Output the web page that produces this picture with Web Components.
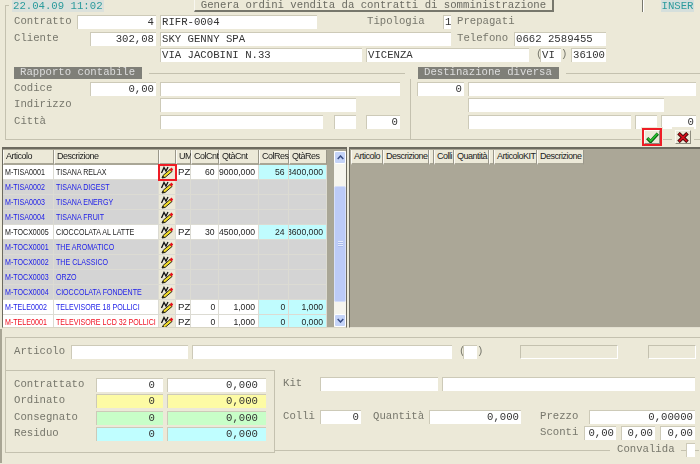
<!DOCTYPE html>
<html lang="it">
<head>
<meta charset="utf-8">
<title>Contratti</title>
<style>
  html, body { margin: 0; height: 100%; overflow: hidden; background: #ece9d8; }
  body { font: 10.67px "Liberation Mono", monospace; color: #333; }
</style>
</head>
<body>
<order-form></order-form>

<script>
/**
 * Makes a small helper that defines a custom element from a template string.
 *
 * @param {string} name - The element name.
 * @param {string} html - The shadow root markup.
 * @param {Function} [setup] - Called with the element when it is connected.
 */
function define (name, html, setup) {
  const template = document.createElement('template')
  template.innerHTML = html
  customElements.define(name, class extends HTMLElement {
    constructor () {
      super()
      this.attachShadow({ mode: 'open' }).appendChild(template.content.cloneNode(true))
    }

    connectedCallback () {
      const w = this.getAttribute('w')
      const ml = this.getAttribute('ml')
      const mt = this.getAttribute('mt')
      if (w) this.style.width = w + 'px'
      if (ml) this.style.marginLeft = ml + 'px'
      if (mt) this.style.marginTop = mt + 'px'
      if (setup) setup(this)
    }
  })
}

// Form pieces
define('form-row', `
<style>
  :host { display: flex; align-items: flex-start; height: 14px; }
</style>
<slot></slot>`)

define('form-label', `
<style>
  :host { display: block; flex: none; height: 14px; line-height: 13px; color: #77776c; white-space: nowrap; }
</style>
<slot></slot>`)

define('form-field', `
<style>
  :host {
    display: block; flex: none; box-sizing: border-box; height: 14px; line-height: 13px;
    padding: 0 2px 0 1px; background: var(--bg, #fff); color: #333; white-space: nowrap; overflow: hidden;
    border-top: 1px solid #cdcab8; border-left: 1px solid #cdcab8;
  }
  :host([r]) { text-align: right; }
  :host([p]) { padding-right: 8px; }
  :host([off]) { background: none; border: 1px solid #c4c1af; border-right-color: #fff; border-bottom-color: #fff; }
  :host([tone=y]) { --bg: #fdfba4; }
  :host([tone=g]) { --bg: #c8fec8; }
  :host([tone=c]) { --bg: #c0feff; }
</style>
<slot></slot>`)

define('section-head', `
<style>
  :host { display: flex; align-items: center; height: 12px; }
  b { flex: none; box-sizing: border-box; height: 12px; line-height: 11px; padding-left: 6px; font-weight: normal; background: #7f7f78; color: #ddd; white-space: nowrap; }
  i { flex: 1; height: 1px; background: #c4c1af; margin-left: 7px; }
</style>
<b part="title" id="t"><slot></slot></b><i></i>`, el => {
  el.shadowRoot.getElementById('t').style.width = el.getAttribute('tw') + 'px'
})

define('tool-button', `
<style>
  :host {
    position: absolute; top: 130px; width: 16px; height: 14px; box-sizing: border-box; display: flex;
    align-items: center; justify-content: center; background: #ece9d8;
    border: 1px solid; border-color: #fbfaf4 #8f8d80 #8f8d80 #fbfaf4; box-shadow: 0 0 0 3px #ece9d8;
  }
  :host([hot]) { outline: 2px solid #ee1c25; outline-offset: 0; }
</style>
<slot></slot>`, el => {
  el.style.left = el.getAttribute('x') + 'px'
})

define('top-bar', `
<style>
  :host { display: flex; height: 13px; align-items: flex-start; }
  .tick { margin: 5px 0 0 5px; width: 3px; height: 8px; border: 1px solid #c4c1af; border-width: 1px 0 0 1px; }
  .date { margin-left: 3px; width: 92px; height: 12px; line-height: 12px; padding-left: 1px; box-sizing: border-box; background: #dbe1dc; color: #2b9a9c; }
  .cmd {
    margin-left: 90px; width: 360px; height: 12px; line-height: 10px; box-sizing: border-box; text-align: center;
    color: #6b6b62; border-right: 2px solid #77776c; border-bottom: 2px solid #77776c; border-left: 1px solid #f8f7f0;
  }
  .sep { margin-left: 88px; width: 1px; height: 12px; background: #77776c; border-right: 1px solid #fff; }
  .mode { margin-left: 17px; width: 33px; height: 12px; line-height: 12px; text-align: center; background: #d5dfdc; color: #2b9a9c; }
</style>
<div class="tick"></div>
<div class="date">22.04.09 11:02</div>
<div class="cmd">Genera ordini vendita da contratti di somministrazione</div>
<div class="sep"></div>
<div class="mode">INSER</div>`)

// Grids
const PENCIL = `<svg width="14" height="14" viewBox="0 0 14 14" aria-hidden="true">
  <path d="M1.5 8 4 2.5 6 6l2-4" fill="none" stroke="#111" stroke-width="1.3"/>
  <path d="M2 13 3 10.5 10 4.5 12 6.5 5 12.5Z" fill="#f3dc2c" stroke="#111" stroke-width=".9"/>
  <path d="M9.5 4.5 11.5 2.5 13.2 4.4 11.6 6.4Z" fill="#e5121c"/>
  <path d="M2 13 3.4 11 4.6 12.2Z" fill="#111"/>
</svg>`

const ROWS = [
  ['M-TISA0001', 'TISANA RELAX', 'PZ', '60', '9000,000', '56', '8400,000', 'on', 1],
  ['M-TISA0002', 'TISANA DIGEST', '', '', '', '', '', 'blue'],
  ['M-TISA0003', 'TISANA ENERGY', '', '', '', '', '', 'blue'],
  ['M-TISA0004', 'TISANA FRUIT', '', '', '', '', '', 'blue'],
  ['M-TOCX0005', 'CIOCCOLATA AL LATTE', 'PZ', '30', '4500,000', '24', '3600,000', 'on'],
  ['M-TOCX0001', 'THE AROMATICO', '', '', '', '', '', 'blue'],
  ['M-TOCX0002', 'THE CLASSICO', '', '', '', '', '', 'blue'],
  ['M-TOCX0003', 'ORZO', '', '', '', '', '', 'blue'],
  ['M-TOCX0004', 'CIOCCOLATA FONDENTE', '', '', '', '', '', 'blue'],
  ['M-TELE0002', 'TELEVISORE 18 POLLICI', 'PZ', '0', '1,000', '0', '1,000', 'bluew'],
  ['M-TELE0001', 'TELEVISORE LCD 32 POLLICI', 'PZ', '0', '1,000', '0', '0,000', 'red']
]

define('scroll-bar', `
<style>
  :host { display: flex; flex-direction: column; width: 12px; background: #f6f5ee; flex: none; }
  .btn { height: 13px; background: #c5d4f8; border: 1px solid #fff; box-sizing: border-box; display: flex; align-items: center; justify-content: center; border-radius: 2px; }
  .thumb { height: 116px; margin-top: 22px; background: #bccbf7; border: 1px solid #d5dffa; box-sizing: border-box; border-radius: 2px; display: flex; align-items: center; justify-content: center; }
  .grip { width: 5px; height: 6px; background: repeating-linear-gradient(#e4ebfd 0 1px, #a9bbec 1px 2px); }
  .rest { flex: 1; }
</style>
<div class="btn"><svg width="7" height="5" viewBox="0 0 7 5"><path d="M.7 4 3.5 1 6.3 4" fill="none" stroke="#3a4e86" stroke-width="1.5"/></svg></div>
<div class="thumb"><div class="grip"></div></div>
<div class="rest"></div>
<div class="btn"><svg width="7" height="5" viewBox="0 0 7 5"><path d="M.7 1 3.5 4 6.3 1" fill="none" stroke="#3a4e86" stroke-width="1.5"/></svg></div>`)

define('grid-head', `
<style>
  :host {
    display: block; flex: none; box-sizing: border-box; height: 15px; padding-left: 2px;
    white-space: nowrap; background: #ece9d8; color: #222;
    font: 9px/13px "Liberation Sans", sans-serif; letter-spacing: -.5px;
    border-right: 1px solid #9a978a; border-bottom: 2px solid #a9a696; border-left: 1px solid #fbfaf4;
  }
</style>
<slot></slot>`)

define('data-row', `
<style>
  :host { display: grid; grid-template-columns: 51px 105px 17px 15px 28px 40px 30px 38px; height: 15px; flex: none; }
  div {
    box-sizing: border-box; height: 15px; padding: 0 1px 0 2px; white-space: nowrap; overflow: hidden;
    font: 9.6px/14px "Liberation Sans", sans-serif; background: var(--row); color: var(--ink);
    border-right: 1px solid #dcdbd3; border-bottom: 1px solid #dcdbd3;
  }
  span { display: inline-block; transform: scaleX(.74); transform-origin: left center; }
  .num { display: flex; justify-content: flex-end; padding-right: 3px; color: #222; }
  .num span { transform-origin: right center; transform: scaleX(.9); flex: none; }
  .res { background: var(--res); }
  .um { color: #222; letter-spacing: .2px; }
  .ico { padding: 0; background: #ece9d8; display: flex; align-items: center; justify-content: center; position: relative; overflow: visible; }
  :host([hot]) .ico { outline: 2px solid #ee1c25; outline-offset: -1px; z-index: 1; }
</style>`, el => {
  const row = ROWS[el.getAttribute('n')]
  const kind = row[7]
  el.style.setProperty('--row', kind === 'blue' ? '#d4d4d4' : '#fff')
  el.style.setProperty('--res', kind === 'blue' ? '#d4d4d4' : '#c0fcfe')
  el.style.setProperty('--ink', kind === 'red' ? '#f01020' : (kind === 'on' ? '#222' : '#1c1ce8'))
  if (row[8]) el.setAttribute('hot', '')
  const cell = (text, cls = '') => `<div class="${cls}"><span>${text}</span></div>`
  el.shadowRoot.innerHTML += cell(row[0]) + cell(row[1]) +
    `<div class="ico">${PENCIL}</div>` +
    `<div class="um">${row[2]}</div>` +
    cell(row[3], 'num') + cell(row[4], 'num') + cell(row[5], 'num res') + cell(row[6], 'num res')
})

define('main-grid', `
<style>
  :host {
    display: flex; flex: none; width: 345px; height: 181px; box-sizing: border-box; background: #a9a696;
    border-top: 2px solid #6c6a5f; border-left: 1px solid #6c6a5f; border-right: 1px solid #6c6a5f; border-bottom: 1px solid #d8d5c5;
  }
  .table { width: 324px; flex: none; display: flex; flex-direction: column; padding-top: 1px; box-sizing: border-box; overflow: hidden; }
  .heads { display: grid; grid-template-columns: 51px 105px 17px 15px 28px 40px 30px 38px; flex: none; }
  scroll-bar { margin: 2px 0 0 7px; }
</style>
<div class="table">
  <div class="heads">
    <grid-head>Articolo</grid-head><grid-head>Descrizione</grid-head><grid-head></grid-head>
    <grid-head>UM</grid-head><grid-head>ColCnt</grid-head><grid-head>QtàCnt</grid-head>
    <grid-head>ColRes</grid-head><grid-head>QtàRes</grid-head>
  </div>
  <div id="body"></div>
</div>
<scroll-bar></scroll-bar>`, el => {
  el.shadowRoot.getElementById('body').innerHTML = ROWS.map((r, i) => `<data-row n="${i}"></data-row>`).join('')
})

define('kit-grid', `
<style>
  :host {
    display: flex; align-items: flex-start; flex: 1; height: 181px; box-sizing: border-box; margin-left: 2px; padding: 1px 0 0 1px; background: #aba797;
    border-top: 2px solid #6c6a5f; border-left: 1px solid #6c6a5f; border-bottom: 1px solid #e4e1d2;
  }
</style>
<grid-head w="32">Articolo</grid-head><grid-head w="46">Descrizione</grid-head><grid-head w="5"></grid-head>
<grid-head w="20">Colli</grid-head><grid-head w="35">Quantità</grid-head><grid-head w="5"></grid-head>
<grid-head w="43">ArticoloKIT</grid-head><grid-head w="47">Descrizione</grid-head>`)

// Sections of the page
define('contract-panel', `
<style>
  :host { display: block; margin-left: 5px; border-left: 1px solid #c4c1af; border-bottom: 1px solid #c4c1af; padding: 2px 0 0 8px; height: 124px; }
  .heads { display: flex; margin: 5px 0 0 0; }
  .heads section-head:first-child { width: 391px; }
  .heads section-head:last-child { flex: 1; margin-left: 13px; }
  .cols { display: flex; margin: 0 0 0 -8px; }
  .left { width: 396px; padding: 3px 0 0 8px; height: 58px; border-right: 1px solid #c4c1af; flex: none; }
  .right { flex: 1; padding: 3px 0 0 6px; }
</style>
<form-row>
  <form-label w="63">Contratto</form-label><form-field w="79" r>4</form-field><form-field ml="4" w="157">RIFR-0004</form-field>
  <form-label ml="50" w="76">Tipologia</form-label><form-field w="8">1</form-field><form-label ml="6">Prepagati</form-label>
</form-row>
<form-row mt="3">
  <form-label w="76">Cliente</form-label><form-field w="66" r>302,08</form-field><form-field ml="4" w="291">SKY GENNY SPA</form-field>
  <form-label ml="6" w="57">Telefono</form-label><form-field w="92">0662 2589455</form-field>
</form-row>
<form-row mt="2">
  <form-field ml="146" w="202">VIA JACOBINI N.33</form-field><form-field ml="4" w="163">VICENZA</form-field>
  <form-label ml="7" w="4">(</form-label><form-field w="21">VI</form-field><form-label w="10">)</form-label><form-field w="35">36100</form-field>
</form-row>
<div class="heads">
  <section-head tw="128">Rapporto contabile</section-head>
  <section-head tw="141">Destinazione diversa</section-head>
</div>
<div class="cols">
  <div class="left">
    <form-row>
      <form-label w="76">Codice</form-label><form-field w="66" r>0,00</form-field><form-field ml="4" w="240"></form-field>
    </form-row>
    <form-row mt="2">
      <form-label w="146">Indirizzo</form-label><form-field w="196"></form-field>
    </form-row>
    <form-row mt="3">
      <form-label w="146">Città</form-label><form-field w="163"></form-field><form-field ml="11" w="22"></form-field><form-field ml="10" w="34" r>0</form-field>
    </form-row>
  </div>
  <div class="right">
    <form-row>
      <form-field w="47" r>0</form-field><form-field ml="4" w="228"></form-field>
    </form-row>
    <form-row mt="2">
      <form-field ml="51" w="196"></form-field>
    </form-row>
    <form-row mt="3">
      <form-field ml="51" w="163"></form-field><form-field ml="4" w="22"></form-field><form-field ml="4" w="35" r>0</form-field>
    </form-row>
  </div>
</div>
<tool-button x="644" hot><svg width="13" height="11" viewBox="0 0 13 11"><path d="M1.2 6.2 4.6 9.6 11.8 1.6" fill="none" stroke="#0b5c14" stroke-width="3.2"/><path d="M1.8 6.2 4.6 9 11.4 1.6" fill="none" stroke="#27c22f" stroke-width="1.6"/></svg></tool-button>
<tool-button x="675"><svg width="12" height="11" viewBox="0 0 12 11"><path d="M1.5 1.2 10.5 9.8M10.5 1.2 1.5 9.8" stroke="#3c0a0a" stroke-width="3.6"/><path d="M2 1.6 10 9.4M10 1.6 2 9.4" stroke="#d4101c" stroke-width="2"/></svg></tool-button>`)

define('detail-panel', `
<style>
  :host { display: block; flex: none; margin-top: 1px; height: 134px; border-left: 2px solid #a8a594; box-sizing: border-box; padding: 8px 0 0 3px; }
  .frame { border-top: 1px solid #c4c1af; border-left: 1px solid #c4c1af; height: 115px; position: relative; }
  .art { padding: 7px 0 0 8px; height: 25px; box-sizing: content-box; }
  .cols { display: flex; }
  .tot { width: 269px; height: 83px; flex: none; box-sizing: border-box; padding: 7px 0 0 8px; border: 1px solid #c4c1af; border-left: 0; }
  .kit { flex: 1; padding: 7px 0 0 8px; }
  .end { display: flex; align-items: center; height: 14px; margin: 3px 0 0 -8px; }
  .end i { flex: none; height: 1px; background: #c4c1af; }
</style>
<div class="frame">
  <form-row class="art">
    <form-label w="57">Articolo</form-label><form-field w="117"></form-field><form-field ml="4" w="260"></form-field>
    <form-label ml="7" w="4">(</form-label><form-field w="14"></form-field><form-label w="43">)</form-label>
    <form-field w="98" off></form-field><form-field ml="30" w="48" off></form-field>
  </form-row>
  <div class="cols">
    <div class="tot">
      <form-row><form-label w="82">Contrattato</form-label><form-field w="67" r p>0</form-field><form-field ml="4" w="99" r p>0,000</form-field></form-row>
      <form-row mt="2"><form-label w="82">Ordinato</form-label><form-field w="67" r p tone="y">0</form-field><form-field ml="4" w="99" r p tone="y">0,000</form-field></form-row>
      <form-row mt="3"><form-label w="82">Consegnato</form-label><form-field w="67" r p tone="g">0</form-field><form-field ml="4" w="99" r p tone="g">0,000</form-field></form-row>
      <form-row mt="2"><form-label w="82">Residuo</form-label><form-field w="67" r p tone="c">0</form-field><form-field ml="4" w="99" r p tone="c">0,000</form-field></form-row>
    </div>
    <div class="kit">
      <form-row><form-label w="37">Kit</form-label><form-field w="118"></form-field><form-field ml="4" w="253"></form-field></form-row>
      <form-row mt="19">
        <form-label w="37">Colli</form-label><form-field w="41" r>0</form-field>
        <form-label ml="12" w="56">Quantità</form-label><form-field w="92" r>0,000</form-field>
        <form-label ml="19" w="49">Prezzo</form-label><form-field w="106" r>0,00000</form-field>
      </form-row>
      <form-row mt="2">
        <form-label ml="257" w="44">Sconti</form-label><form-field w="32" r>0,00</form-field><form-field ml="5" w="34" r>0,00</form-field><form-field ml="5" w="35" r>0,00</form-field>
      </form-row>
      <div class="end">
        <i style="width:335px"></i><form-label ml="7" w="64">Convalida</form-label><i style="width:5px"></i><form-field w="9"></form-field><i style="width:4px"></i>
      </div>
    </div>
  </div>
</div>`)

define('order-form', `
<style>
  :host { display: flex; flex-direction: column; width: 700px; height: 464px; overflow: hidden; position: relative; filter: blur(.3px); }
  .grids { display: flex; margin: 7px 0 0 2px; }
</style>
<top-bar></top-bar>
<contract-panel></contract-panel>
<div class="grids"><main-grid></main-grid><kit-grid></kit-grid></div>
<detail-panel></detail-panel>`)
</script>
</body>
</html>
